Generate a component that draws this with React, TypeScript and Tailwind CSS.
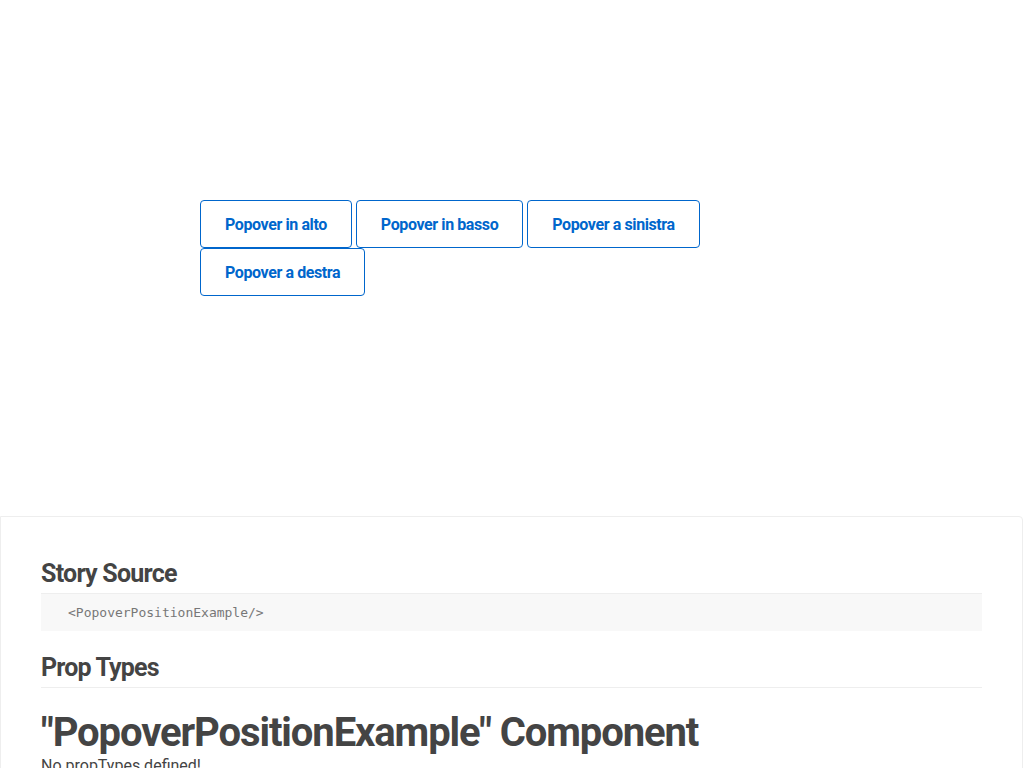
export default function App() {
  const buttons = ["Popover in alto", "Popover in basso", "Popover a sinistra", "Popover a destra"];

  return (
    <div className="min-h-screen bg-white font-['Roboto',sans-serif]">
      {/* Story preview */}
      <div className="h-[516px] pt-[200px] pl-[200px]">
        <div className="w-[600px] flex flex-wrap gap-x-[4px]">
          {buttons.map((label) => (
            <button
              key={label}
              className="h-[48px] pt-[1px] px-[24px] border border-[#0066cc] rounded-[4px] bg-white text-[#0066cc] text-[16px] font-bold tracking-[-0.4px] font-['Roboto',sans-serif]"
            >
              {label}
            </button>
          ))}
        </div>
      </div>

      {/* Info panel */}
      <div className="border border-[#eeeeee] rounded-tr-[4px] mr-[1px] px-[40px] pt-[40px] text-[#444444]">
        <h2 className="text-[25px] font-bold tracking-[-0.75px] leading-[34px] pb-[2px] border-b border-[#eeeeee]">
          Story Source
        </h2>
        <pre className="bg-[#f8f8f8] px-[27px] py-[10px] text-[13px] leading-[17px] text-[#777777] font-['DejaVu_Sans_Mono',monospace]">
          {"<PopoverPositionExample/>"}
        </pre>
        <h2 className="mt-[20px] text-[25px] font-bold tracking-[-0.85px] leading-[34px] pb-[2px] border-b border-[#eeeeee]">
          Prop Types
        </h2>
        <h1 className="mt-[22px] text-[40px] font-bold tracking-[-1.1px] leading-[46px]">
          "PopoverPositionExample" Component
        </h1>
        <p className="text-[16px] leading-[20px]">No propTypes defined!</p>
      </div>
    </div>
  );
}
